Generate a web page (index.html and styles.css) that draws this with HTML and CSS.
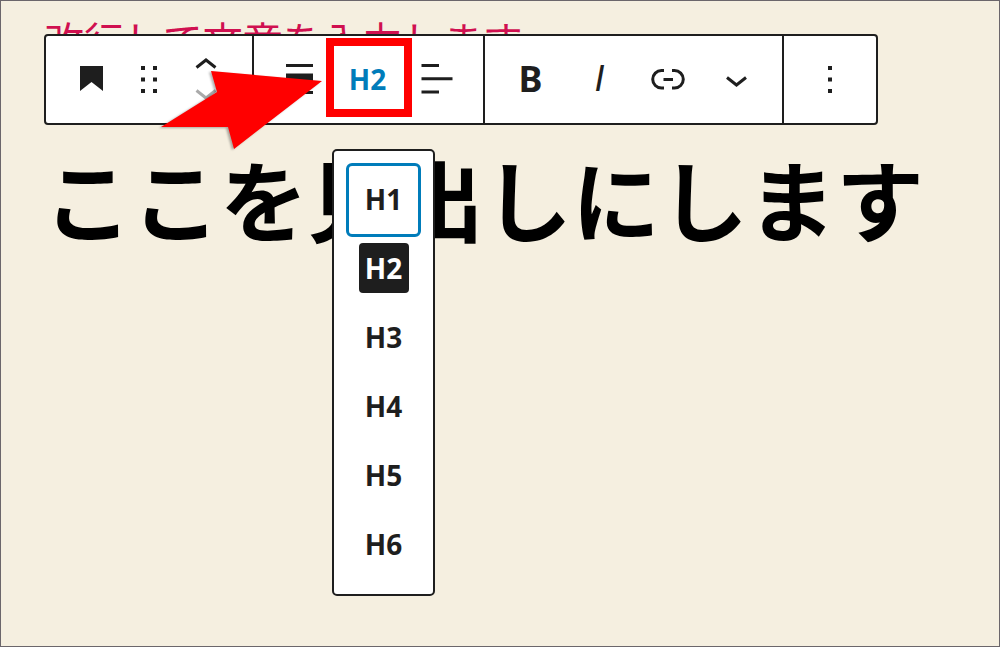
FILE: index.html
```html
<!DOCTYPE html>
<html lang="ja">
<head>
<meta charset="utf-8">
<title>見出しブロック</title>
<link rel="stylesheet" href="styles.css">
</head>
<body>
<main class="editor">
  <p class="paragraph">改行して文章を入力します</p>
  <h2 class="heading">ここを見出しにします</h2>

  <div class="toolbar" role="toolbar" aria-label="ブロックツール">
    <div class="group">
      <button class="tool" type="button" aria-label="見出し">
        <svg class="icon" viewBox="0 0 49 49"><path d="M13 11h23v25l-11.500-9L13 36z"/></svg>
      </button>
      <button class="tool tool-narrow" type="button" aria-label="ドラッグ">
        <svg class="icon" viewBox="0 0 49 49"><path d="M16 11h4v4h-4zM28 11h4v4h-4zM16 22.500h4v4h-4zM28 22.500h4v4h-4zM16 34h4v4h-4zM28 34h4v4h-4z"/></svg>
      </button>
      <button class="tool" type="button" aria-label="移動">
        <svg class="icon line" viewBox="0 0 49 49"><path d="M13.500 12.500L23 5l9.500 7.500"/><path class="muted" d="M13.500 35.500L23 43l9.500-7.500"/></svg>
      </button>
    </div>
    <div class="group group-even">
      <button class="tool" type="button" aria-label="配置を変更">
        <svg class="icon" viewBox="0 0 49 49"><path d="M11 9h27v3H11zM11 18.500h27V30H11zM11 36h27v3H11z"/></svg>
      </button>
      <button class="tool tool-level" type="button" aria-expanded="true">H2<span class="highlight"></span></button>
      <button class="tool" type="button" aria-label="テキストの配置">
        <svg class="icon" viewBox="0 0 49 49"><path d="M8.500 9H26v3H8.500zM8.500 22.300h31v3h-31zM8.500 35.500H26v3H8.500z"/></svg>
      </button>
    </div>
    <div class="group">
      <button class="tool tool-bold" type="button" aria-label="太字">B</button>
      <button class="tool tool-italic" type="button" aria-label="イタリック">I</button>
      <button class="tool" type="button" aria-label="リンク">
        <svg class="icon line" viewBox="0 0 49 49"><path d="M20 15.500h-2.500a8.800 8.800 0 0 0 0 17.600H20M28 15.500h2.500a8.800 8.800 0 0 1 0 17.600H28M19.500 24.500H29"/></svg>
      </button>
      <button class="tool" type="button" aria-label="さらに表示">
        <svg class="icon line" viewBox="0 0 49 49"><path d="M14 22.500l9.500 7.500 9.500-7.500"/></svg>
      </button>
    </div>
    <div class="group group-last">
      <button class="tool" type="button" aria-label="オプション">
        <svg class="icon" viewBox="0 0 49 49"><path d="M22 11h4v4h-4zM22 22.500h4v4h-4zM22 34h4v4h-4z"/></svg>
      </button>
    </div>
  </div>

  <div class="levels" role="menu" aria-label="見出しレベル">
    <button class="level level-focus" type="button" role="menuitem">H1</button>
    <button class="level" type="button" role="menuitem"><span class="level-current">H2</span></button>
    <button class="level" type="button" role="menuitem">H3</button>
    <button class="level" type="button" role="menuitem">H4</button>
    <button class="level" type="button" role="menuitem">H5</button>
    <button class="level" type="button" role="menuitem">H6</button>
  </div>

  <svg class="arrow" viewBox="0 0 164 82" aria-hidden="true"><path d="M162 12L51 2l6 21L1 58h67l6 22z"/></svg>
</main>
</body>
</html>
```

FILE: styles.css
```css
* {
  box-sizing: border-box;
}

body {
  margin: 0;
  background: #f5efe0;
  color: #1e1e1e;
  font-family: "Noto Sans", "Noto Sans CJK JP", sans-serif;
}

.editor {
  position: relative;
  min-height: 100vh;
  padding: 14px 43px;
  border: 1px solid #6b666b;
}

.paragraph {
  margin: 0;
  color: #d01050;
  font: 400 40px/48px "Noto Sans CJK JP", sans-serif;
  white-space: nowrap;
}

.heading {
  margin: 78px 0 0;
  color: #000;
  font: 700 88px/112px "Noto Sans CJK JP", sans-serif;
  white-space: nowrap;
}

.toolbar {
  position: absolute;
  top: 33px;
  left: 43px;
  display: flex;
  border: 2px solid #1e1e1e;
  border-radius: 4px;
  background: #fff;
}

.group {
  display: flex;
  padding: 0 10px 0 11px;
}

.group + .group {
  border-left: 2px solid #1e1e1e;
}

.group-even {
  padding: 0 11px;
}

.group-last {
  padding: 0 11px 0 12px;
}

.tool {
  display: flex;
  align-items: center;
  justify-content: center;
  width: 69px;
  height: 87px;
  padding: 0;
  border: 0;
  background: none;
  color: inherit;
  font: 700 28px/32px "Noto Sans", sans-serif;
}

.tool-narrow {
  width: 47px;
}

.tool-level {
  position: relative;
  padding: 0 2px 2px 0;
  color: #007cba;
}

.tool-bold {
  padding-bottom: 2px;
  font-size: 36px;
}

.tool-italic {
  padding-bottom: 2px;
  font: italic 400 36px/40px "Liberation Sans", sans-serif;
}

.icon {
  flex: none;
  width: 49px;
  height: 49px;
  fill: #1e1e1e;
}

.line {
  fill: none;
  stroke: #1e1e1e;
  stroke-width: 3;
}

.muted {
  stroke: #aaa;
}

.highlight {
  position: absolute;
  inset: 2px -9px 6px -8px;
  border: 8px solid #f00;
}

.levels {
  position: absolute;
  top: 148px;
  left: 331px;
  display: flex;
  flex-direction: column;
  padding: 15px 12px;
  border: 2px solid #1e1e1e;
  border-radius: 5px;
  background: #fff;
}

.level {
  display: flex;
  align-items: center;
  justify-content: center;
  width: 75px;
  height: 69px;
  padding: 0 0 2px;
  border: 0;
  background: none;
  color: inherit;
  font: 700 28px/32px "Noto Sans", sans-serif;
}

.level-focus {
  height: 74px;
  margin: -3px 0;
  border: 3px solid #007cba;
  border-radius: 6px;
}

.level-current {
  display: grid;
  place-items: center;
  width: 50px;
  height: 50px;
  border-radius: 4px;
  background: #1e1e1e;
  color: #fff;
}

.arrow {
  position: absolute;
  top: 68px;
  left: 159px;
  width: 164px;
  height: 82px;
  overflow: visible;
  fill: #f00;
  filter: drop-shadow(-2px 1px 1px rgba(0, 0, 0, 0.3));
}
```
